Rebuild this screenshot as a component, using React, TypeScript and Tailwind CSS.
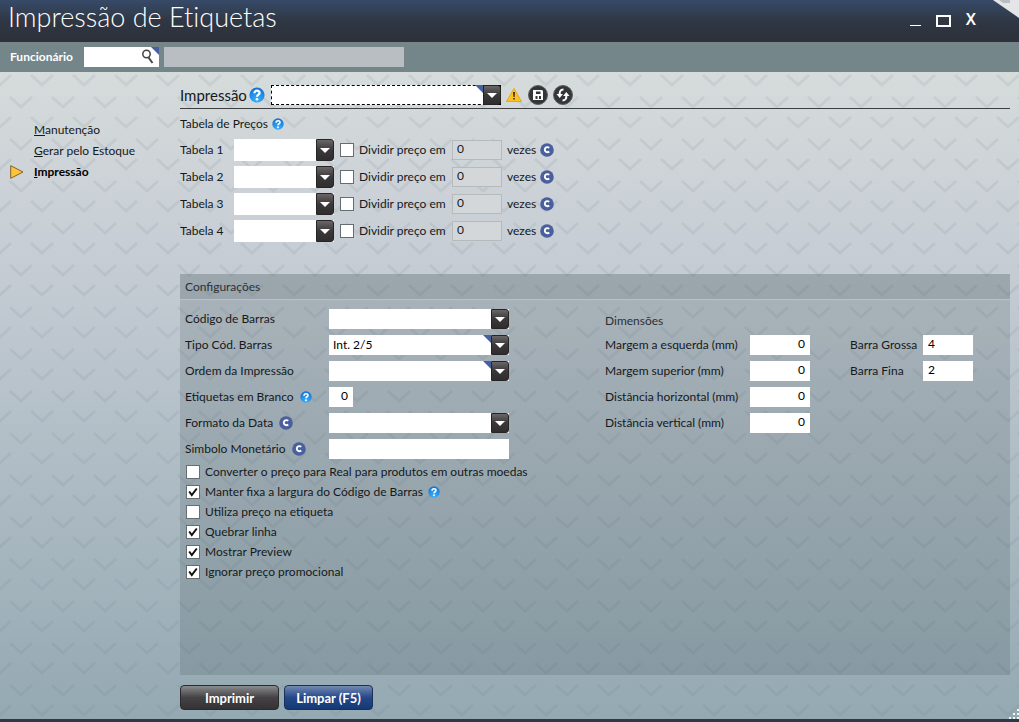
import { ReactNode } from "react";

const priceTables = ["Tabela 1", "Tabela 2", "Tabela 3", "Tabela 4"];

const margins = [
  { id: "margin-left", label: "Margem a esquerda (mm)" },
  { id: "margin-top", label: "Margem superior (mm)" },
  { id: "distance-x", label: "Distância horizontal (mm)" },
  { id: "distance-y", label: "Distância vertical (mm)" },
];

const bars = [
  { id: "bar-thick", label: "Barra Grossa", value: "4" },
  { id: "bar-thin", label: "Barra Fina", value: "2" },
];

const options = [
  { id: "convert", label: "Converter o preço para Real para produtos em outras moedas", checked: false },
  { id: "fixed-width", label: "Manter fixa a largura do Código de Barras", checked: true, help: true },
  { id: "use-price", label: "Utiliza preço na etiqueta", checked: false },
  { id: "break-line", label: "Quebrar linha", checked: true },
  { id: "preview", label: "Mostrar Preview", checked: true },
  { id: "ignore-promo", label: "Ignorar preço promocional", checked: true },
];

function Chevrons() {
  return (
    <svg className="pointer-events-none absolute inset-0 h-full w-full" aria-hidden="true">
      <defs>
        <pattern id="chevrons" width="42" height="42" patternUnits="userSpaceOnUse">
          <path
            d="M-11 3L0 13 11 3M31 3L42 13 53 3M10 25L21 35 32 25"
            fill="none"
            stroke="#5d6c74"
            strokeOpacity="0.1"
            strokeWidth="3"
          />
        </pattern>
      </defs>
      <rect width="100%" height="100%" fill="url(#chevrons)" />
    </svg>
  );
}

function HelpIcon({ large }: { large?: boolean }) {
  return (
    <svg viewBox="0 0 16 16" className={large ? "size-4 shrink-0" : "size-3 shrink-0"} role="img" aria-label="Ajuda">
      <defs>
        <radialGradient id="help" cx="50%" cy="85%" r="80%">
          <stop offset="0" stopColor="#37b4ff" />
          <stop offset="1" stopColor="#1673d6" />
        </radialGradient>
      </defs>
      <circle cx="8" cy="8" r="7.6" fill="url(#help)" />
      <path d="M5.4 6.2C5.4 2.800 10.8 3 10.6 6 10.4 7.7 8 7.700 8 9.800" fill="none" stroke="#fff" strokeWidth="2.200" />
      <circle cx="8" cy="12.300" r="1.300" fill="#fff" />
    </svg>
  );
}

function ConfigIcon() {
  return (
    <svg viewBox="0 0 14 14" className="size-3.5 shrink-0" role="img" aria-label="Configuração">
      <circle cx="7" cy="7" r="6.800" fill="#4a5f9e" />
      <path d="M9.300 4.800C7 3.200 4.800 4.700 4.800 6.700S7 10 9.300 8.700" fill="none" stroke="#fff" strokeWidth="1.900" />
    </svg>
  );
}

function Corner({ className }: { className: string }) {
  return (
    <svg viewBox="0 0 8 8" className={`pointer-events-none absolute top-0 size-2 ${className}`} aria-hidden="true">
      <path d="M0 0h8v8z" fill="#47609f" />
    </svg>
  );
}

type ComboProps = {
  id?: string;
  label?: string;
  value?: string;
  corner?: boolean;
  className?: string;
};

function Combo({ id, label, value = "", corner, className = "h-5 w-[180px]" }: ComboProps) {
  return (
    <div className={`relative flex ${className}`}>
      <select id={id} aria-label={label} className="h-full w-full appearance-none bg-white pl-1 pr-5 text-black outline-none">
        <option>{value}</option>
      </select>
      {corner && <Corner className="right-[18px]" />}
      <span className="pointer-events-none absolute inset-y-0 right-0 flex w-[18px] items-center justify-center rounded-r-[3px] border border-[#262425] bg-linear-to-b from-[#6b6667] via-[#3b3839] to-[#302d2e]">
        <svg viewBox="0 0 10 5" className="h-[5px] w-2.5" aria-hidden="true">
          <path d="M0 0h10L5 5z" fill="#fff" />
        </svg>
      </span>
    </div>
  );
}

function Tick({ id, checked }: { id: string; checked?: boolean }) {
  return (
    <span className="relative flex size-3.5 shrink-0">
      <input id={id} type="checkbox" defaultChecked={checked} className="peer size-3.5 appearance-none border border-[#666d70] bg-white" />
      <svg viewBox="0 0 14 14" className="pointer-events-none absolute inset-0 hidden size-3.5 peer-checked:block" aria-hidden="true">
        <path d="M3.200 6.500l2.600 3.500 5-6.500" fill="none" stroke="#111" strokeWidth="2" />
      </svg>
    </span>
  );
}

function Field({ id, label, icon, children }: { id: string; label: string; icon?: ReactNode; children: ReactNode }) {
  return (
    <div className="flex h-5 items-center">
      <div className="flex w-36 shrink-0 items-center gap-1.5">
        <label htmlFor={id}>{label}</label>
        {icon}
      </div>
      {children}
    </div>
  );
}

function TitleBar() {
  return (
    <header className="relative flex h-[42px] items-start justify-between bg-linear-to-b from-[#374a69] via-[#2f3744] to-[#2d3139] pl-2 pr-[43px] text-white">
      <h1 className="text-[27px] leading-[34px] font-light [font-variant-ligatures:none]">Impressão de Etiquetas</h1>
      <div className="flex gap-[15px] pt-[10px]">
        <button aria-label="Minimizar" className="flex h-4 w-[11px] items-end">
          <span className="h-px w-full bg-white" />
        </button>
        <button aria-label="Maximizar" className="mt-[5px] h-3 w-[15px] border-2 border-white" />
        <button aria-label="Fechar" className="font-[Noto_Sans] text-base leading-4 font-semibold">X</button>
      </div>
      <svg viewBox="0 0 26 18" className="absolute top-0 right-0 h-[18px] w-[26px]" aria-hidden="true">
        <path d="M0 0h26v18z" fill="#e3e5e8" />
        <path d="M6 0h11v3h-7z" fill="#b9bdc1" />
      </svg>
    </header>
  );
}

function EmployeeBar() {
  return (
    <div className="flex h-[30px] items-center bg-[#75868a] pl-2.5">
      <label htmlFor="employee" className="w-[74px] font-bold text-white">Funcionário</label>
      <div className="relative flex h-5 w-[75px]">
        <input id="employee" className="h-full w-full bg-white px-1 pr-5 outline-none" />
        <Corner className="right-0" />
        <svg viewBox="0 0 14 16" className="pointer-events-none absolute top-0.5 right-1 h-4 w-3.5" aria-hidden="true">
          <circle cx="5.500" cy="5" r="3.700" fill="#fff" stroke="#444" strokeWidth="1.500" />
          <path d="M7.500 8.500l4 5.500" stroke="#444" strokeWidth="2" />
        </svg>
      </div>
      <input aria-label="Nome do funcionário" readOnly className="ml-[5px] h-5 w-60 bg-[#b8bec1] outline-none" />
    </div>
  );
}

function Sidebar() {
  return (
    <nav className="flex w-[180px] shrink-0 flex-col pt-[47px] leading-[21px]">
      <a href="#manutencao" className="pl-[34px]"><u>M</u>anutenção</a>
      <a href="#estoque" className="pl-[34px]"><u>G</u>erar pelo Estoque</a>
      <a href="#impressao" className="flex items-center pl-2.5 font-bold text-black">
        <svg viewBox="0 0 14 14" className="mr-2.5 size-3.5" aria-hidden="true">
          <path d="M0.700 0.700v12.600L13 7z" fill="#fbc63d" stroke="#80632d" />
        </svg>
        <span><u>I</u>mpressão</span>
      </a>
    </nav>
  );
}

function PrintHeading() {
  return (
    <div className="flex h-[27px] items-center border-b border-[#3c4043]">
      <h2 className="flex w-[91px] shrink-0 items-center gap-0.5 text-[15px]">
        Impressão
        <HelpIcon large />
      </h2>
      <Combo label="Impressão" corner className="h-5 w-[230px] [&>select]:border [&>select]:border-dashed [&>select]:border-black" />
      <svg viewBox="0 0 16 14" className="ml-[5px] h-3.5 w-4" role="img" aria-label="Aviso">
        <path d="M8 0.500L15.500 13.500H0.500z" fill="#fcc21e" stroke="#e8a714" strokeLinejoin="round" />
        <path d="M7 4h2l-.4 5H7.400zM7.200 10h1.600v1.600H7.200z" fill="#3b2d12" />
      </svg>
      <button aria-label="Salvar" className="ml-1.5">
        <svg viewBox="0 0 20 20" className="size-5">
          <circle cx="10" cy="10" r="9.500" fill="#333536" stroke="#5e6163" />
          <path d="M5 5h9l1 1v9H5z" fill="#fff" />
          <path d="M8 6.500h4.500v2.500H8zM7.500 11h5.500v3H7.500z" fill="#333536" />
          <path d="M9.500 11h1.500v3H9.500z" fill="#fff" />
        </svg>
      </button>
      <button aria-label="Atualizar" className="ml-[5px]">
        <svg viewBox="0 0 20 20" className="size-5">
          <circle cx="10" cy="10" r="9.500" fill="#333536" stroke="#5e6163" />
          <path d="M10.500 4.500C7 4.500 6.500 7 6.700 10M9.500 15.500c3.500 0 4-2.500 3.800-5.500" fill="none" stroke="#fff" strokeWidth="2" />
          <path d="M3.500 9h6.400l-3.200 4zM10.100 11h6.400l-3.200-4z" fill="#fff" />
        </svg>
      </button>
    </div>
  );
}

function PriceTables() {
  return (
    <section className="mt-[5px]">
      <h3 className="flex h-5 items-center gap-1">
        Tabela de Preços <HelpIcon />
      </h3>
      <div className="mt-[5px] flex flex-col gap-[5px]">
        {priceTables.map((name, i) => (
          <div key={name} className="flex h-[22px] items-center">
            <label htmlFor={`table-${i}`} className="w-[54px]">{name}</label>
            <Combo id={`table-${i}`} className="h-[22px] w-[100px]" />
            <div className="ml-1.5 flex w-28 items-center gap-[5px]">
              <Tick id={`split-${i}`} />
              <label htmlFor={`split-${i}`}>Dividir preço em</label>
            </div>
            <input aria-label={`Vezes ${name}`} defaultValue="0" className="h-5 w-[50px] border border-[#b5babc] bg-[#d3d7d9] px-1 pb-0.5 outline-none" />
            <span className="ml-[5px] flex items-center gap-1">vezes <ConfigIcon /></span>
          </div>
        ))}
      </div>
    </section>
  );
}

function Settings() {
  return (
    <section className="mt-8 flex flex-1 flex-col bg-[#37474d]/18">
      <h3 className="flex h-[26px] items-center border-b border-[#b9c1c8] bg-[#37474d]/12 pl-[5px] text-[#2b3138]">Configurações</h3>
      <div className="flex px-[5px] pt-[9px]">
        <div className="w-[420px] shrink-0">
          <div className="flex flex-col gap-1.5">
            <Field id="barcode" label="Código de Barras">
              <Combo id="barcode" />
            </Field>
            <Field id="barcode-type" label="Tipo Cód. Barras">
              <Combo id="barcode-type" value="Int. 2/5" corner />
            </Field>
            <Field id="print-order" label="Ordem da Impressão">
              <Combo id="print-order" corner />
            </Field>
            <Field id="blank-labels" label="Etiquetas em Branco" icon={<HelpIcon />}>
              <input id="blank-labels" defaultValue="0" className="h-5 w-6 bg-white pr-[5px] pb-0.5 text-right text-black outline-none" />
            </Field>
            <Field id="date-format" label="Formato da Data" icon={<ConfigIcon />}>
              <Combo id="date-format" />
            </Field>
            <Field id="currency" label="Simbolo Monetário" icon={<ConfigIcon />}>
              <input id="currency" className="h-5 w-[180px] bg-white px-1 outline-none" />
            </Field>
          </div>
          <div className="mt-[3px] pl-px">
            {options.map((option) => (
              <div key={option.id} className="flex h-5 items-center gap-[5px]">
                <Tick id={option.id} checked={option.checked} />
                <label htmlFor={option.id}>{option.label}</label>
                {option.help && <HelpIcon />}
              </div>
            ))}
          </div>
        </div>
        <div className="w-[245px] shrink-0">
          <h4 className="mb-1.5 h-5 leading-6 text-[#2b3138]">Dimensões</h4>
          <div className="flex flex-col gap-1.5">
            {margins.map((m) => (
              <div key={m.id} className="flex h-5 items-center">
                <label htmlFor={m.id} className="w-[145px]">{m.label}</label>
                <input id={m.id} defaultValue="0" className="h-5 w-[60px] bg-white pr-[5px] pb-0.5 text-right text-black outline-none" />
              </div>
            ))}
          </div>
        </div>
        <div className="flex flex-col gap-1.5 pt-[26px]">
          {bars.map((b) => (
            <div key={b.id} className="flex h-5 items-center">
              <label htmlFor={b.id} className="w-[73px]">{b.label}</label>
              <input id={b.id} defaultValue={b.value} className="h-5 w-[50px] bg-white px-[5px] pb-0.5 text-black outline-none" />
            </div>
          ))}
        </div>
      </div>
    </section>
  );
}

export default function App() {
  return (
    <div className="flex min-h-screen flex-col border-b-[3px] border-[#2f3843] font-[Lato,sans-serif] text-[12px] leading-5 text-[#15191c]">
      <TitleBar />
      <EmployeeBar />
      <div className="relative flex flex-1 bg-linear-to-b from-[#d6dbdb] from-0% via-[#c5ccd4] via-30% to-[#94a9b2] to-100%">
        <Chevrons />
        <div className="relative flex flex-1">
          <Sidebar />
          <main className="flex flex-1 flex-col pt-2.5 pr-[9px] pb-[9px]">
            <PrintHeading />
            <PriceTables />
            <Settings />
            <div className="mt-2.5 flex gap-[5px] text-[13px] font-bold text-white">
              <button className="h-[25px] w-[99px] rounded-[4px] border border-[#2b2b2d] bg-linear-to-b from-[#8b8c8e] via-[#444244] to-[#353234]">Imprimir</button>
              <button className="h-[25px] w-[89px] rounded-[4px] border border-[#1c3056] bg-linear-to-b from-[#7289b2] via-[#254889] to-[#153876]">Limpar (F5)</button>
            </div>
          </main>
        </div>
        <svg viewBox="0 0 10 10" className="absolute right-0 bottom-0 size-2.5" aria-hidden="true">
          <path d="M8 0h2v2h-2zM4 4h2v2h-2zM8 4h2v2h-2zM0 8h2v2h-2zM4 8h2v2h-2zM8 8h2v2h-2z" fill="#f2f5f6" />
        </svg>
      </div>
    </div>
  );
}
